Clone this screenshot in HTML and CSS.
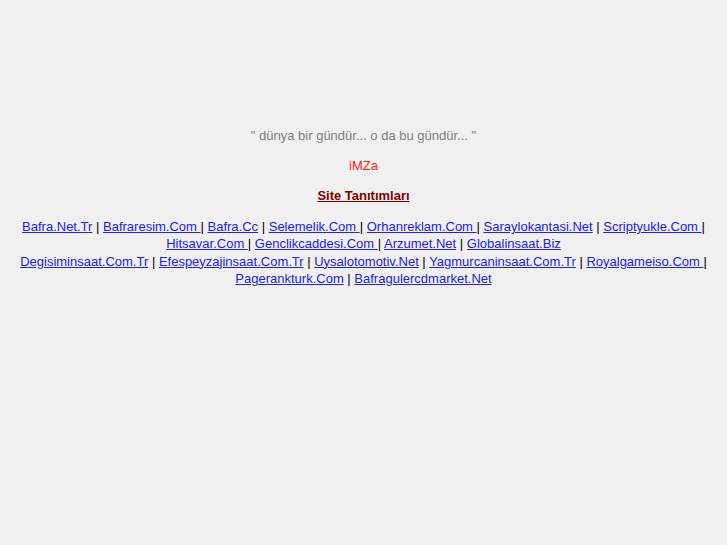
FILE: index.html
```html
<!DOCTYPE html>
<html>
<head>
<meta charset="utf-8">
<link rel="stylesheet" href="styles.css">
</head>
<body>
<div class="page">
  <p class="quote">" dünya bir gündür... o da bu gündür... "</p>
  <p class="sign">iMZa</p>
  <p class="title"><a href="#">Site Tanıtımları</a></p>
  <p class="links"><a href="#">Bafra.Net.Tr</a> | <a href="#">Bafraresim.Com </a> | <a href="#">Bafra.Cc</a> | <a href="#">Selemelik.Com </a> | <a href="#">Orhanreklam.Com </a> | <a href="#">Saraylokantasi.Net</a> | <a href="#">Scriptyukle.Com </a> | <a href="#">Hitsavar.Com </a> | <a href="#">Genclikcaddesi.Com </a> | <a href="#">Arzumet.Net</a> | <a href="#">Globalinsaat.Biz</a><br><a href="#">Degisiminsaat.Com.Tr</a> | <a href="#">Efespeyzajinsaat.Com.Tr</a> | <a href="#">Uysalotomotiv.Net</a> | <a href="#">Yagmurcaninsaat.Com.Tr</a> | <a href="#">Royalgameiso.Com </a> | <a href="#">Pagerankturk.Com</a> | <a href="#">Bafragulercdmarket.Net</a></p>
</div>
</body>
</html>
```
FILE: styles.css
```css
html, body {
  background: #f0f0f0;
}
body {
  margin: 8px;
  font-family: "Liberation Sans", Arial, sans-serif;
  font-size: 13px;
  color: #000;
}
.page {
  padding-top: 119px;
  text-align: center;
}
.page p {
  margin: 0;
  line-height: 17px;
}
.quote {
  color: #808080;
}
.sign {
  color: #ff2222;
  margin-top: 13px !important;
}
.title {
  margin-top: 13px !important;
  font-weight: bold;
}
.title a {
  color: #800000;
}
.page .links {
  margin-top: 14px;
  line-height: 17.4px;
}
.links a {
  color: #2222ee;
}
```
